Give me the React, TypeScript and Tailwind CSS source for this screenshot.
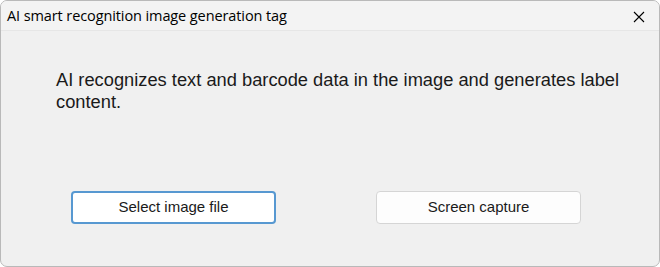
export default function App() {
  return (
    <div className="w-[660px] h-[267px] overflow-hidden rounded-[7px] border border-[#b9b9b9] bg-[#f0f0f0] flex flex-col">
      <div className="h-[30px] shrink-0 bg-[#f3f3f3] border-b border-[#e6e6e6] flex items-center justify-between pl-[6px] pr-[14px]">
        <span className="text-[14.5px] text-black font-['Open_Sans',sans-serif] tracking-[-0.1px]">
          AI smart recognition image generation tag
        </span>
        <svg width="12" height="12" viewBox="0 0 12 12" className="mt-[2px]">
          <path d="M1 1L11 11M11 1L1 11" stroke="#000" strokeWidth="1.1" />
        </svg>
      </div>
      <div className="flex-1 flex flex-col font-['Liberation_Sans',Arial,sans-serif]">
        <p className="mt-[38px] ml-[55px] mr-[30px] text-[18.3px] leading-[22px] text-[#1a1a1a]">
          AI recognizes text and barcode data in the image and generates label content.
        </p>
        <div className="mt-[78px] flex gap-[100px] pl-[70px]">
          <button className="w-[205px] h-[33px] rounded-[4px] bg-white border-2 border-[#0f6cbd]/70 text-[15px] text-[#1a1a1a]">
            Select image file
          </button>
          <button className="w-[205px] h-[33px] rounded-[4px] bg-[#fdfdfd] border border-[#d5d5d5] text-[15px] text-[#1a1a1a]">
            Screen capture
          </button>
        </div>
      </div>
    </div>
  )
}
